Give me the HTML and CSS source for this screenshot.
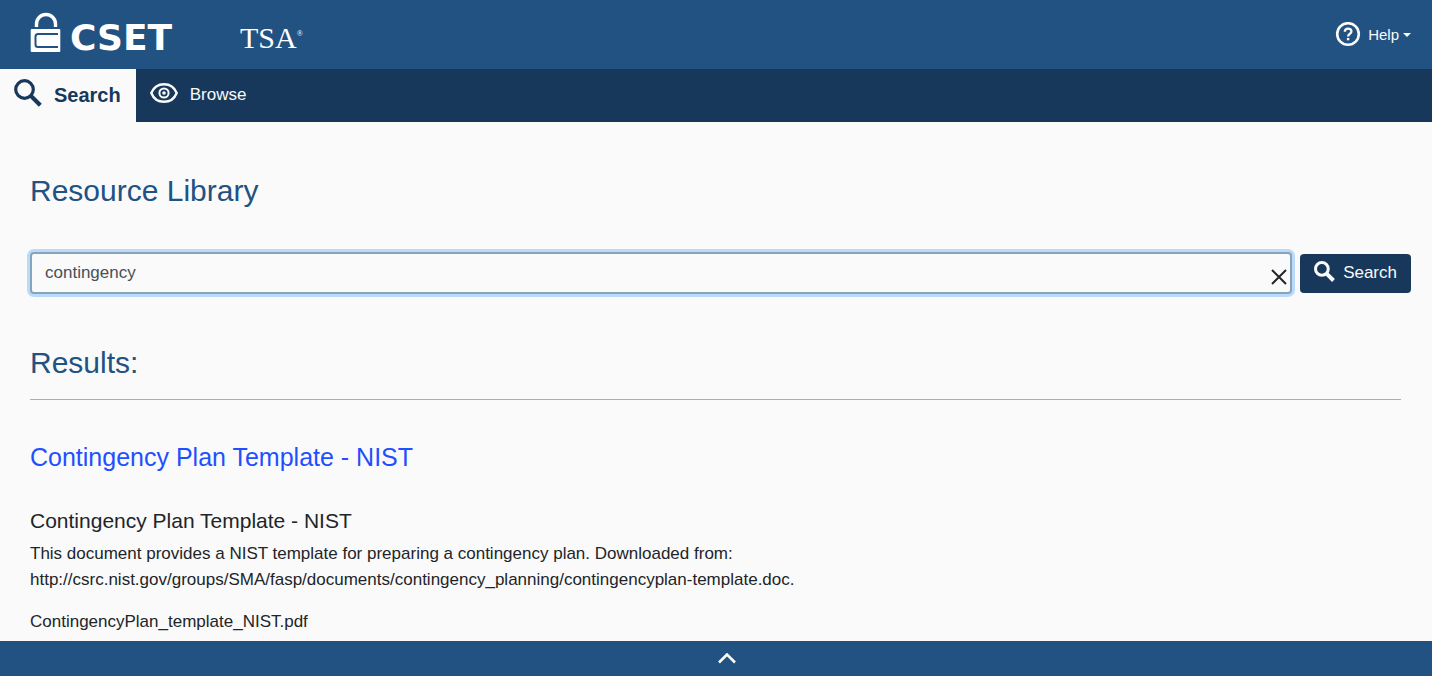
FILE: index.html
```
<!DOCTYPE html>
<html lang="en">
<head>
<meta charset="utf-8">
<meta name="viewport" content="width=device-width, initial-scale=1">
<title>CSET TSA - Resource Library</title>
<link rel="stylesheet" href="styles.css">
</head>
<body>
<header class="topbar">
  <a class="brand" href="#">
    <svg class="brand-lock" viewBox="0 0 32 42" aria-hidden="true">
      <path d="M6.500 15V12A9.300 9.300 0 0 1 25.500 12V15" fill="none" stroke="#fff" stroke-width="3.400"/>
      <rect x="0.700" y="17" width="29.600" height="23" rx="1" fill="#fff"/>
      <path d="M28 22H8Q5.500 22 5.500 24.500V32.500Q5.500 35 8 35H28" fill="none" stroke="#225282" stroke-width="2"/>
    </svg>
    <span class="brand-name">CSET</span>
    <span class="brand-org">TSA<sup>®</sup></span>
  </a>
  <button class="help" type="button">
    <svg class="help-icon" viewBox="0 0 26 26" aria-hidden="true">
      <circle cx="13" cy="12" r="10.800" fill="none" stroke="#fafafa" stroke-width="2.600"/>
      <path d="M9.800 9.800C9.800 5.600 16.400 5.600 16.400 9.400C16.400 11.800 13.100 11.700 13.100 14.400" fill="none" stroke="#fafafa" stroke-width="2.300"/>
      <rect x="11.900" y="15.900" width="2.400" height="2.400" fill="#fafafa"/>
    </svg>
    <span>Help</span>
    <span class="caret"></span>
  </button>
</header>
<nav class="tabs">
  <a class="tab tab-active" href="#search" aria-current="page">
    <svg class="tab-icon" viewBox="0 0 28 28" aria-hidden="true">
      <circle cx="10.500" cy="10.500" r="8.800" fill="none" stroke="currentColor" stroke-width="3.200"/>
      <path d="M16.800 16.800L26.300 26.300" stroke="currentColor" stroke-width="4.200"/>
    </svg>
    <span>Search</span>
  </a>
  <a class="tab" href="#browse">
    <svg class="tab-icon" viewBox="0 0 28 28" aria-hidden="true">
      <path d="M1.300 14C3.700 8 8.300 5.200 14 5.200S24.300 8 26.700 14C24.300 20 19.700 22.800 14 22.800S3.700 20 1.300 14Z" fill="none" stroke="currentColor" stroke-width="2.400"/>
      <circle cx="14" cy="14" r="4.600" fill="none" stroke="currentColor" stroke-width="2"/>
      <circle cx="14" cy="14" r="1.800" fill="currentColor"/>
    </svg>
    <span>Browse</span>
  </a>
</nav>
<main class="content">
  <h1 class="heading">Resource Library</h1>
  <form class="search" role="search">
    <div class="search-field">
      <input class="search-input" type="text" value="contingency" aria-label="Search the library">
      <button class="clear" type="button" aria-label="Clear">
        <svg class="clear-icon" viewBox="0 0 16 16" aria-hidden="true"><path d="M1 1L15 15M15 1L1 15" stroke="#212529" stroke-width="2"/></svg>
      </button>
    </div>
    <button class="search-button" type="button">
      <svg class="search-icon" viewBox="0 0 28 28" aria-hidden="true">
        <circle cx="10.500" cy="10.500" r="8.500" fill="none" stroke="currentColor" stroke-width="4"/>
        <path d="M16.800 16.800L26 26" stroke="currentColor" stroke-width="5.200"/>
      </svg>
      <span>Search</span>
    </button>
  </form>
  <section class="results">
    <h2 class="heading results-heading">Results:</h2>
    <article class="result">
      <h3 class="result-title"><a href="#result">Contingency Plan Template - NIST</a></h3>
      <h4 class="result-subtitle">Contingency Plan Template - NIST</h4>
      <p class="result-text">This document provides a NIST template for preparing a contingency plan. Downloaded from:<br>http://csrc.nist.gov/groups/SMA/fasp/documents/contingency_planning/contingencyplan-template.doc.</p>
      <p class="result-text">ContingencyPlan_template_NIST.pdf</p>
    </article>
  </section>
</main>
<footer class="footer">
  <button class="expand" type="button" aria-label="Expand footer">
    <svg class="expand-icon" viewBox="0 0 20 12" aria-hidden="true"><path d="M2 9.500L10 1.500L18 9.500" fill="none" stroke="#fafafa" stroke-width="2.600"/></svg>
  </button>
</footer>
</body>
</html>
```
FILE: styles.css
```
* { box-sizing: border-box; }

body {
  margin: 0;
  height: 100vh;
  display: flex;
  flex-direction: column;
  background: #fafafa;
  color: #212529;
  font-family: "Liberation Sans", Arial, sans-serif;
  font-size: 17px;
  line-height: 26px;
}

button { font: inherit; border: 0; cursor: pointer; }
svg { display: block; flex: none; }

.topbar {
  flex: none;
  height: 69px;
  display: flex;
  align-items: center;
  justify-content: space-between;
  padding: 0 21px 0 30px;
  background: #225282;
}

.brand {
  display: flex;
  align-items: flex-end;
  padding-bottom: 4px;
  color: #fff;
  text-decoration: none;
  line-height: 32px;
}
.brand-lock { width: 32px; height: 42px; margin-right: 8px; }
.brand-name {
  min-width: 170px;
  font-family: "DejaVu Sans", sans-serif;
  font-size: 36px;
  font-weight: bold;
}
.brand-org { font-family: "Liberation Serif", serif; font-size: 30px; }
.brand-org sup { font-size: 8px; line-height: 8px; vertical-align: 12px; }

.help {
  display: flex;
  align-items: center;
  gap: 4px;
  padding: 0;
  background: none;
  color: #fafafa;
  font-size: 15px;
}
.help-icon { width: 26px; height: 26px; margin-right: 3px; }
.caret { border: 4px solid transparent; border-top-color: #fafafa; border-bottom: 0; }

.tabs { flex: none; display: flex; height: 53px; background: #17385a; }
.tab {
  display: flex;
  align-items: center;
  gap: 12px;
  padding: 0 15px 2px 14px;
  color: #fafafa;
  text-decoration: none;
}
.tab-icon { width: 28px; height: 28px; margin-bottom: 4px; }
.tab-active { background: #fafafa; color: #17385a; font-size: 20px; font-weight: bold; }

.content { flex: 1; min-height: 0; overflow: hidden; padding: 51px 21px 0 30px; }
.heading { margin: 0; color: #225282; font-size: 30px; font-weight: normal; line-height: 36px; }

.search { display: flex; align-items: center; gap: 8px; margin: 43px 0 51px; }
.search-field { flex: 1; position: relative; }
.search-input {
  display: block;
  width: 100%;
  height: 42px;
  padding: 0 40px 0 13px;
  border: 2px solid #86a5b8;
  border-radius: 4px;
  outline: 0;
  box-shadow: 0 0 0 3px #bbdafb;
  background: #fafafa;
  color: #495057;
  font: inherit;
}
.clear { position: absolute; right: 5px; top: 17px; padding: 0; background: none; }
.clear-icon { width: 16px; height: 16px; }
.search-button {
  display: flex;
  align-items: center;
  gap: 8px;
  height: 39px;
  padding: 0 14px;
  border-radius: 4px;
  background: #17385a;
  color: #fafafa;
}
.search-icon { width: 21px; height: 21px; margin-bottom: 3px; }

.results { margin-right: 10px; }
.results-heading { padding-bottom: 18px; border-bottom: 1px solid #adadad; }
.result { padding-top: 41px; }
.result-title { margin: 0 0 35px; font-size: 25px; font-weight: normal; line-height: 32px; }
.result-title a { color: #1f4fff; text-decoration: none; }
.result-subtitle { margin: 0 0 7px; font-size: 21px; font-weight: normal; line-height: 26px; }
.result-text { margin: 0 0 16px; }

.footer { flex: none; background: #225282; }
.expand {
  display: flex;
  align-items: center;
  justify-content: center;
  width: 100%;
  height: 35px;
  padding: 0 0 0 22px;
  background: none;
}
.expand-icon { width: 20px; height: 12px; }
```
